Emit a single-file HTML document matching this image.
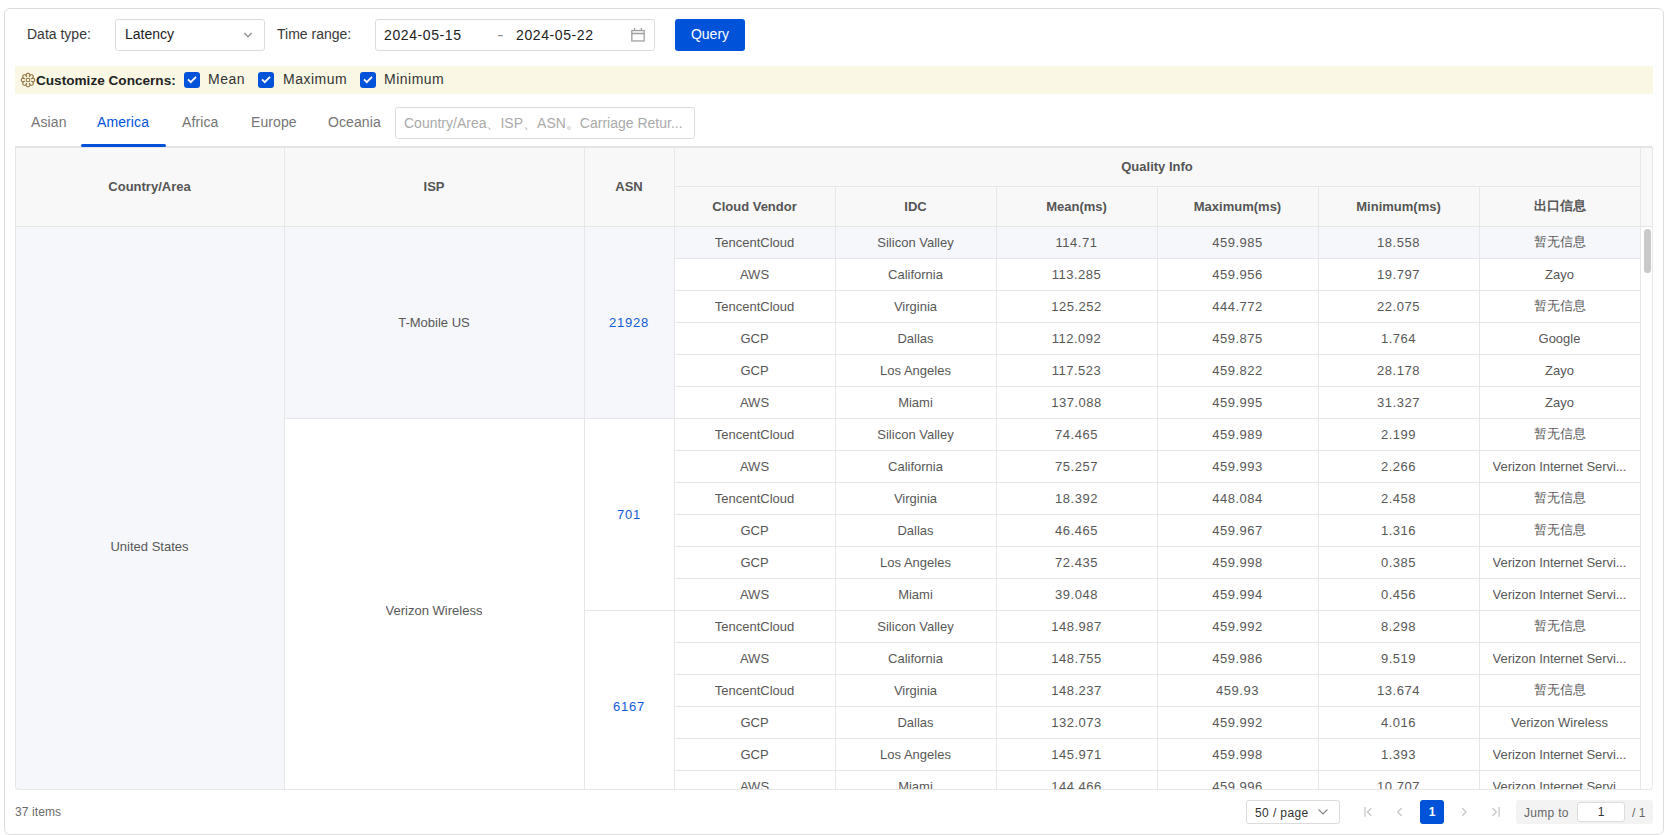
<!DOCTYPE html><html><head><meta charset="utf-8"><title>Quality</title><style>
*{box-sizing:border-box;margin:0;padding:0}
html,body{width:1670px;height:835px;overflow:hidden;background:#fff}
body{position:relative;font-family:"Liberation Sans",sans-serif;color:#333}
.a{position:absolute}
.t{position:absolute;white-space:nowrap}
.card{left:4px;top:8px;width:1660px;height:827px;border:1px solid #dcdcdc;border-radius:6px}
.lbl{font-size:14px;color:#383838;line-height:32px;top:18px}
.box{border:1px solid #dcdcdc;border-radius:3px;background:#fff}
.btn{left:675px;top:19px;width:70px;height:32px;background:#0052d9;border-radius:3px;color:#fff;font-size:14px;line-height:30px;text-align:center}
.bar{left:15px;top:66px;width:1638px;height:28px;background:#faf8e5}
.cb{width:16px;height:16px;background:#0052d9;border-radius:3px;top:72px}
.cbl{font-size:14px;color:#333;top:65px;line-height:28px;letter-spacing:.5px}
.tab{font-size:14px;color:#757575;top:107px;line-height:31px;letter-spacing:.1px}
.tab.on{color:#0052d9}
.hd{background:#f8f8f8}
.hc{position:absolute;display:flex;align-items:center;justify-content:center;font-weight:bold;font-size:13px;color:#555;white-space:nowrap}
.c{position:absolute;display:flex;align-items:center;justify-content:center;font-size:13px;color:#585858;white-space:nowrap;overflow:hidden}
.c span{display:block;overflow:hidden;text-overflow:ellipsis;max-width:100%}
.hl{position:absolute;height:1px;background:#e6e7ea}
.vl{position:absolute;width:1px;background:#e6e7ea}
.hov{background:#f5f7fa}
</style></head><body>
<div class="a card"></div>
<div class="t lbl" style="left:27px">Data type:</div>
<div class="a box" style="left:115px;top:19px;width:150px;height:32px"></div>
<div class="t lbl" style="left:125px;color:#222">Latency</div>
<svg class="a" style="left:241px;top:30px" width="14" height="10" viewBox="0 0 14 10"><path d="M3.3 3 L7 6.8 L10.7 3" fill="none" stroke="#8f8f8f" stroke-width="1.25"/></svg>
<div class="t lbl" style="left:277px">Time range:</div>
<div class="a box" style="left:375px;top:19px;width:280px;height:32px"></div>
<div class="t lbl" style="left:384px;top:19px;color:#222;letter-spacing:.6px">2024-05-15</div>
<div class="t lbl" style="left:498px;top:19px;color:#888;transform:scaleX(1.3)">-</div>
<div class="t lbl" style="left:516px;top:19px;color:#222;letter-spacing:.6px">2024-05-22</div>
<svg class="a" style="left:630px;top:27px" width="16" height="16" viewBox="0 0 16 16"><rect x="1.85" y="3.55" width="12.3" height="10.4" fill="none" stroke="#a0a0a0" stroke-width="1.3"/><path d="M1.5 6.5H14.5M4.5 0.9V3.5M11.4 0.9V3.5" stroke="#a0a0a0" stroke-width="1.3"/></svg>
<div class="a btn">Query</div>
<div class="a bar"></div>
<svg class="a" style="left:20px;top:72px" width="16" height="16" viewBox="0 0 16 16"><polygon points="14.70,8.00 14.68,8.26 14.63,8.52 14.53,8.77 14.40,9.01 14.22,9.24 14.01,9.44 13.74,9.62 13.42,9.76 13.00,9.84 11.33,9.38 12.84,10.23 13.08,10.59 13.21,10.92 13.27,11.23 13.28,11.53 13.24,11.81 13.16,12.07 13.05,12.32 12.91,12.54 12.74,12.74 12.54,12.91 12.32,13.05 12.07,13.16 11.81,13.24 11.53,13.28 11.23,13.27 10.92,13.21 10.59,13.08 10.23,12.84 9.38,11.33 9.84,13.00 9.76,13.42 9.62,13.74 9.44,14.01 9.24,14.22 9.01,14.40 8.77,14.53 8.52,14.63 8.26,14.68 8.00,14.70 7.74,14.68 7.48,14.63 7.23,14.53 6.99,14.40 6.76,14.22 6.56,14.01 6.38,13.74 6.24,13.42 6.16,13.00 6.62,11.33 5.77,12.84 5.41,13.08 5.08,13.21 4.77,13.27 4.47,13.28 4.19,13.24 3.93,13.16 3.68,13.05 3.46,12.91 3.26,12.74 3.09,12.54 2.95,12.32 2.84,12.07 2.76,11.81 2.72,11.53 2.73,11.23 2.79,10.92 2.92,10.59 3.16,10.23 4.67,9.38 3.00,9.84 2.58,9.76 2.26,9.62 1.99,9.44 1.78,9.24 1.60,9.01 1.47,8.77 1.37,8.52 1.32,8.26 1.30,8.00 1.32,7.74 1.37,7.48 1.47,7.23 1.60,6.99 1.78,6.76 1.99,6.56 2.26,6.38 2.58,6.24 3.00,6.16 4.67,6.62 3.16,5.77 2.92,5.41 2.79,5.08 2.73,4.77 2.72,4.47 2.76,4.19 2.84,3.93 2.95,3.68 3.09,3.46 3.26,3.26 3.46,3.09 3.68,2.95 3.93,2.84 4.19,2.76 4.47,2.72 4.77,2.73 5.08,2.79 5.41,2.92 5.77,3.16 6.62,4.67 6.16,3.00 6.24,2.58 6.38,2.26 6.56,1.99 6.76,1.78 6.99,1.60 7.23,1.47 7.48,1.37 7.74,1.32 8.00,1.30 8.26,1.32 8.52,1.37 8.77,1.47 9.01,1.60 9.24,1.78 9.44,1.99 9.62,2.26 9.76,2.58 9.84,3.00 9.38,4.67 10.23,3.16 10.59,2.92 10.92,2.79 11.23,2.73 11.53,2.72 11.81,2.76 12.07,2.84 12.32,2.95 12.54,3.09 12.74,3.26 12.91,3.46 13.05,3.68 13.16,3.93 13.24,4.19 13.28,4.47 13.27,4.77 13.21,5.08 13.08,5.41 12.84,5.77 11.33,6.62 13.00,6.16 13.42,6.24 13.74,6.38 14.01,6.56 14.22,6.76 14.40,6.99 14.53,7.23 14.63,7.48 14.68,7.74" fill="none" stroke="#93703f" stroke-width="1.1" stroke-linejoin="round"/><circle cx="8" cy="8" r="1.8" fill="none" stroke="#93703f" stroke-width="1.1"/></svg>
<div class="t cbl" style="left:36px;top:67px;font-weight:bold;color:#222;font-size:13.6px;letter-spacing:0">Customize Concerns:</div>
<div class="a cb" style="left:184px"><svg width="16" height="16" viewBox="0 0 16 16"><path d="M4 7.4 L6.8 10.2 L12 4.8" fill="none" stroke="#fff" stroke-width="1.8"/></svg></div>
<div class="t cbl" style="left:208px">Mean</div>
<div class="a cb" style="left:258px"><svg width="16" height="16" viewBox="0 0 16 16"><path d="M4 7.4 L6.8 10.2 L12 4.8" fill="none" stroke="#fff" stroke-width="1.8"/></svg></div>
<div class="t cbl" style="left:283px">Maximum</div>
<div class="a cb" style="left:360px"><svg width="16" height="16" viewBox="0 0 16 16"><path d="M4 7.4 L6.8 10.2 L12 4.8" fill="none" stroke="#fff" stroke-width="1.8"/></svg></div>
<div class="t cbl" style="left:384px">Minimum</div>
<div class="t tab" style="left:31px">Asian</div>
<div class="t tab on" style="left:97px">America</div>
<div class="t tab" style="left:182px">Africa</div>
<div class="t tab" style="left:251px">Europe</div>
<div class="t tab" style="left:328px">Oceania</div>
<div class="a box" style="left:395px;top:107px;width:300px;height:32px"></div>
<div class="a" style="left:81px;top:144px;width:85px;height:3px;border-radius:2px;background:#0052d9;z-index:5"></div>
<div class="t lbl" style="left:404px;top:107px;color:#aaa;width:280px;overflow:hidden;text-overflow:ellipsis">Country/Area、ISP、ASN。Carriage Retur...</div>
<div class="a hd" style="left:15px;top:147px;width:1637px;height:79px"></div>
<div class="a hov" style="left:15px;top:226px;width:269px;height:563px"></div>
<div class="a hov" style="left:284px;top:226px;width:390px;height:192px"></div>
<div class="a hov" style="left:674px;top:226px;width:966px;height:32px"></div>
<div class="hc" style="left:15px;top:147px;width:269px;height:79px">Country/Area</div>
<div class="hc" style="left:284px;top:147px;width:300px;height:79px">ISP</div>
<div class="hc" style="left:584px;top:147px;width:90px;height:79px">ASN</div>
<div class="hc" style="left:674px;top:147px;width:966px;height:39px">Quality Info</div>
<div class="hc" style="left:674px;top:186px;width:161px;height:40px">Cloud Vendor</div>
<div class="hc" style="left:835px;top:186px;width:161px;height:40px">IDC</div>
<div class="hc" style="left:996px;top:186px;width:161px;height:40px">Mean(ms)</div>
<div class="hc" style="left:1157px;top:186px;width:161px;height:40px">Maximum(ms)</div>
<div class="hc" style="left:1318px;top:186px;width:161px;height:40px">Minimum(ms)</div>
<div class="hc" style="left:1479px;top:186px;width:161px;height:40px">出口信息</div>
<div class="hl" style="left:15px;top:146px;width:1637px;background:#e3e3e3"></div>
<div class="hl" style="left:15px;top:147px;width:1638px"></div>
<div class="hl" style="left:674px;top:186px;width:966px"></div>
<div class="hl" style="left:15px;top:226px;width:1637px"></div>
<div class="vl" style="left:284px;top:147px;height:642px"></div>
<div class="vl" style="left:584px;top:147px;height:642px"></div>
<div class="vl" style="left:674px;top:147px;height:642px"></div>
<div class="vl" style="left:1640px;top:147px;height:642px"></div>
<div class="vl" style="left:835px;top:186px;height:603px"></div>
<div class="vl" style="left:996px;top:186px;height:603px"></div>
<div class="vl" style="left:1157px;top:186px;height:603px"></div>
<div class="vl" style="left:1318px;top:186px;height:603px"></div>
<div class="vl" style="left:1479px;top:186px;height:603px"></div>
<div class="hl" style="left:674px;top:258px;width:966px"></div>
<div class="hl" style="left:674px;top:290px;width:966px"></div>
<div class="hl" style="left:674px;top:322px;width:966px"></div>
<div class="hl" style="left:674px;top:354px;width:966px"></div>
<div class="hl" style="left:674px;top:386px;width:966px"></div>
<div class="hl" style="left:674px;top:418px;width:966px"></div>
<div class="hl" style="left:674px;top:450px;width:966px"></div>
<div class="hl" style="left:674px;top:482px;width:966px"></div>
<div class="hl" style="left:674px;top:514px;width:966px"></div>
<div class="hl" style="left:674px;top:546px;width:966px"></div>
<div class="hl" style="left:674px;top:578px;width:966px"></div>
<div class="hl" style="left:674px;top:610px;width:966px"></div>
<div class="hl" style="left:674px;top:642px;width:966px"></div>
<div class="hl" style="left:674px;top:674px;width:966px"></div>
<div class="hl" style="left:674px;top:706px;width:966px"></div>
<div class="hl" style="left:674px;top:738px;width:966px"></div>
<div class="hl" style="left:674px;top:770px;width:966px"></div>
<div class="hl" style="left:284px;top:418px;width:390px"></div>
<div class="hl" style="left:584px;top:610px;width:90px"></div>
<div class="c" style="left:15px;top:226px;width:269px;height:640px;"><span>United States</span></div>
<div class="c" style="left:284px;top:226px;width:300px;height:192px;"><span>T-Mobile US</span></div>
<div class="c" style="left:284px;top:418px;width:300px;height:384px;"><span>Verizon Wireless</span></div>
<div class="c" style="left:584px;top:226px;width:90px;height:192px;color:#1257d8;letter-spacing:.8px"><span>21928</span></div>
<div class="c" style="left:584px;top:418px;width:90px;height:192px;color:#1257d8;letter-spacing:.8px"><span>701</span></div>
<div class="c" style="left:584px;top:610px;width:90px;height:192px;color:#1257d8;letter-spacing:.8px"><span>6167</span></div>
<div class="c" style="left:674px;top:226px;width:161px;height:32px;"><span>TencentCloud</span></div>
<div class="c" style="left:835px;top:226px;width:161px;height:32px;"><span>Silicon Valley</span></div>
<div class="c" style="left:996px;top:226px;width:161px;height:32px;letter-spacing:.5px;"><span>114.71</span></div>
<div class="c" style="left:1157px;top:226px;width:161px;height:32px;letter-spacing:.5px;"><span>459.985</span></div>
<div class="c" style="left:1318px;top:226px;width:161px;height:32px;letter-spacing:.5px;"><span>18.558</span></div>
<div class="c" style="left:1479px;top:226px;width:161px;height:32px;padding:0 6px;"><span>暂无信息</span></div>
<div class="c" style="left:674px;top:258px;width:161px;height:32px;"><span>AWS</span></div>
<div class="c" style="left:835px;top:258px;width:161px;height:32px;"><span>California</span></div>
<div class="c" style="left:996px;top:258px;width:161px;height:32px;letter-spacing:.5px;"><span>113.285</span></div>
<div class="c" style="left:1157px;top:258px;width:161px;height:32px;letter-spacing:.5px;"><span>459.956</span></div>
<div class="c" style="left:1318px;top:258px;width:161px;height:32px;letter-spacing:.5px;"><span>19.797</span></div>
<div class="c" style="left:1479px;top:258px;width:161px;height:32px;padding:0 6px;"><span>Zayo</span></div>
<div class="c" style="left:674px;top:290px;width:161px;height:32px;"><span>TencentCloud</span></div>
<div class="c" style="left:835px;top:290px;width:161px;height:32px;"><span>Virginia</span></div>
<div class="c" style="left:996px;top:290px;width:161px;height:32px;letter-spacing:.5px;"><span>125.252</span></div>
<div class="c" style="left:1157px;top:290px;width:161px;height:32px;letter-spacing:.5px;"><span>444.772</span></div>
<div class="c" style="left:1318px;top:290px;width:161px;height:32px;letter-spacing:.5px;"><span>22.075</span></div>
<div class="c" style="left:1479px;top:290px;width:161px;height:32px;padding:0 6px;"><span>暂无信息</span></div>
<div class="c" style="left:674px;top:322px;width:161px;height:32px;"><span>GCP</span></div>
<div class="c" style="left:835px;top:322px;width:161px;height:32px;"><span>Dallas</span></div>
<div class="c" style="left:996px;top:322px;width:161px;height:32px;letter-spacing:.5px;"><span>112.092</span></div>
<div class="c" style="left:1157px;top:322px;width:161px;height:32px;letter-spacing:.5px;"><span>459.875</span></div>
<div class="c" style="left:1318px;top:322px;width:161px;height:32px;letter-spacing:.5px;"><span>1.764</span></div>
<div class="c" style="left:1479px;top:322px;width:161px;height:32px;padding:0 6px;"><span>Google</span></div>
<div class="c" style="left:674px;top:354px;width:161px;height:32px;"><span>GCP</span></div>
<div class="c" style="left:835px;top:354px;width:161px;height:32px;"><span>Los Angeles</span></div>
<div class="c" style="left:996px;top:354px;width:161px;height:32px;letter-spacing:.5px;"><span>117.523</span></div>
<div class="c" style="left:1157px;top:354px;width:161px;height:32px;letter-spacing:.5px;"><span>459.822</span></div>
<div class="c" style="left:1318px;top:354px;width:161px;height:32px;letter-spacing:.5px;"><span>28.178</span></div>
<div class="c" style="left:1479px;top:354px;width:161px;height:32px;padding:0 6px;"><span>Zayo</span></div>
<div class="c" style="left:674px;top:386px;width:161px;height:32px;"><span>AWS</span></div>
<div class="c" style="left:835px;top:386px;width:161px;height:32px;"><span>Miami</span></div>
<div class="c" style="left:996px;top:386px;width:161px;height:32px;letter-spacing:.5px;"><span>137.088</span></div>
<div class="c" style="left:1157px;top:386px;width:161px;height:32px;letter-spacing:.5px;"><span>459.995</span></div>
<div class="c" style="left:1318px;top:386px;width:161px;height:32px;letter-spacing:.5px;"><span>31.327</span></div>
<div class="c" style="left:1479px;top:386px;width:161px;height:32px;padding:0 6px;"><span>Zayo</span></div>
<div class="c" style="left:674px;top:418px;width:161px;height:32px;"><span>TencentCloud</span></div>
<div class="c" style="left:835px;top:418px;width:161px;height:32px;"><span>Silicon Valley</span></div>
<div class="c" style="left:996px;top:418px;width:161px;height:32px;letter-spacing:.5px;"><span>74.465</span></div>
<div class="c" style="left:1157px;top:418px;width:161px;height:32px;letter-spacing:.5px;"><span>459.989</span></div>
<div class="c" style="left:1318px;top:418px;width:161px;height:32px;letter-spacing:.5px;"><span>2.199</span></div>
<div class="c" style="left:1479px;top:418px;width:161px;height:32px;padding:0 6px;"><span>暂无信息</span></div>
<div class="c" style="left:674px;top:450px;width:161px;height:32px;"><span>AWS</span></div>
<div class="c" style="left:835px;top:450px;width:161px;height:32px;"><span>California</span></div>
<div class="c" style="left:996px;top:450px;width:161px;height:32px;letter-spacing:.5px;"><span>75.257</span></div>
<div class="c" style="left:1157px;top:450px;width:161px;height:32px;letter-spacing:.5px;"><span>459.993</span></div>
<div class="c" style="left:1318px;top:450px;width:161px;height:32px;letter-spacing:.5px;"><span>2.266</span></div>
<div class="c" style="left:1479px;top:450px;width:161px;height:32px;padding:0 6px;letter-spacing:-.05px;"><span>Verizon Internet Servi...</span></div>
<div class="c" style="left:674px;top:482px;width:161px;height:32px;"><span>TencentCloud</span></div>
<div class="c" style="left:835px;top:482px;width:161px;height:32px;"><span>Virginia</span></div>
<div class="c" style="left:996px;top:482px;width:161px;height:32px;letter-spacing:.5px;"><span>18.392</span></div>
<div class="c" style="left:1157px;top:482px;width:161px;height:32px;letter-spacing:.5px;"><span>448.084</span></div>
<div class="c" style="left:1318px;top:482px;width:161px;height:32px;letter-spacing:.5px;"><span>2.458</span></div>
<div class="c" style="left:1479px;top:482px;width:161px;height:32px;padding:0 6px;"><span>暂无信息</span></div>
<div class="c" style="left:674px;top:514px;width:161px;height:32px;"><span>GCP</span></div>
<div class="c" style="left:835px;top:514px;width:161px;height:32px;"><span>Dallas</span></div>
<div class="c" style="left:996px;top:514px;width:161px;height:32px;letter-spacing:.5px;"><span>46.465</span></div>
<div class="c" style="left:1157px;top:514px;width:161px;height:32px;letter-spacing:.5px;"><span>459.967</span></div>
<div class="c" style="left:1318px;top:514px;width:161px;height:32px;letter-spacing:.5px;"><span>1.316</span></div>
<div class="c" style="left:1479px;top:514px;width:161px;height:32px;padding:0 6px;"><span>暂无信息</span></div>
<div class="c" style="left:674px;top:546px;width:161px;height:32px;"><span>GCP</span></div>
<div class="c" style="left:835px;top:546px;width:161px;height:32px;"><span>Los Angeles</span></div>
<div class="c" style="left:996px;top:546px;width:161px;height:32px;letter-spacing:.5px;"><span>72.435</span></div>
<div class="c" style="left:1157px;top:546px;width:161px;height:32px;letter-spacing:.5px;"><span>459.998</span></div>
<div class="c" style="left:1318px;top:546px;width:161px;height:32px;letter-spacing:.5px;"><span>0.385</span></div>
<div class="c" style="left:1479px;top:546px;width:161px;height:32px;padding:0 6px;letter-spacing:-.05px;"><span>Verizon Internet Servi...</span></div>
<div class="c" style="left:674px;top:578px;width:161px;height:32px;"><span>AWS</span></div>
<div class="c" style="left:835px;top:578px;width:161px;height:32px;"><span>Miami</span></div>
<div class="c" style="left:996px;top:578px;width:161px;height:32px;letter-spacing:.5px;"><span>39.048</span></div>
<div class="c" style="left:1157px;top:578px;width:161px;height:32px;letter-spacing:.5px;"><span>459.994</span></div>
<div class="c" style="left:1318px;top:578px;width:161px;height:32px;letter-spacing:.5px;"><span>0.456</span></div>
<div class="c" style="left:1479px;top:578px;width:161px;height:32px;padding:0 6px;letter-spacing:-.05px;"><span>Verizon Internet Servi...</span></div>
<div class="c" style="left:674px;top:610px;width:161px;height:32px;"><span>TencentCloud</span></div>
<div class="c" style="left:835px;top:610px;width:161px;height:32px;"><span>Silicon Valley</span></div>
<div class="c" style="left:996px;top:610px;width:161px;height:32px;letter-spacing:.5px;"><span>148.987</span></div>
<div class="c" style="left:1157px;top:610px;width:161px;height:32px;letter-spacing:.5px;"><span>459.992</span></div>
<div class="c" style="left:1318px;top:610px;width:161px;height:32px;letter-spacing:.5px;"><span>8.298</span></div>
<div class="c" style="left:1479px;top:610px;width:161px;height:32px;padding:0 6px;"><span>暂无信息</span></div>
<div class="c" style="left:674px;top:642px;width:161px;height:32px;"><span>AWS</span></div>
<div class="c" style="left:835px;top:642px;width:161px;height:32px;"><span>California</span></div>
<div class="c" style="left:996px;top:642px;width:161px;height:32px;letter-spacing:.5px;"><span>148.755</span></div>
<div class="c" style="left:1157px;top:642px;width:161px;height:32px;letter-spacing:.5px;"><span>459.986</span></div>
<div class="c" style="left:1318px;top:642px;width:161px;height:32px;letter-spacing:.5px;"><span>9.519</span></div>
<div class="c" style="left:1479px;top:642px;width:161px;height:32px;padding:0 6px;letter-spacing:-.05px;"><span>Verizon Internet Servi...</span></div>
<div class="c" style="left:674px;top:674px;width:161px;height:32px;"><span>TencentCloud</span></div>
<div class="c" style="left:835px;top:674px;width:161px;height:32px;"><span>Virginia</span></div>
<div class="c" style="left:996px;top:674px;width:161px;height:32px;letter-spacing:.5px;"><span>148.237</span></div>
<div class="c" style="left:1157px;top:674px;width:161px;height:32px;letter-spacing:.5px;"><span>459.93</span></div>
<div class="c" style="left:1318px;top:674px;width:161px;height:32px;letter-spacing:.5px;"><span>13.674</span></div>
<div class="c" style="left:1479px;top:674px;width:161px;height:32px;padding:0 6px;"><span>暂无信息</span></div>
<div class="c" style="left:674px;top:706px;width:161px;height:32px;"><span>GCP</span></div>
<div class="c" style="left:835px;top:706px;width:161px;height:32px;"><span>Dallas</span></div>
<div class="c" style="left:996px;top:706px;width:161px;height:32px;letter-spacing:.5px;"><span>132.073</span></div>
<div class="c" style="left:1157px;top:706px;width:161px;height:32px;letter-spacing:.5px;"><span>459.992</span></div>
<div class="c" style="left:1318px;top:706px;width:161px;height:32px;letter-spacing:.5px;"><span>4.016</span></div>
<div class="c" style="left:1479px;top:706px;width:161px;height:32px;padding:0 6px;"><span>Verizon Wireless</span></div>
<div class="c" style="left:674px;top:738px;width:161px;height:32px;"><span>GCP</span></div>
<div class="c" style="left:835px;top:738px;width:161px;height:32px;"><span>Los Angeles</span></div>
<div class="c" style="left:996px;top:738px;width:161px;height:32px;letter-spacing:.5px;"><span>145.971</span></div>
<div class="c" style="left:1157px;top:738px;width:161px;height:32px;letter-spacing:.5px;"><span>459.998</span></div>
<div class="c" style="left:1318px;top:738px;width:161px;height:32px;letter-spacing:.5px;"><span>1.393</span></div>
<div class="c" style="left:1479px;top:738px;width:161px;height:32px;padding:0 6px;letter-spacing:-.05px;"><span>Verizon Internet Servi...</span></div>
<div class="c" style="left:674px;top:770px;width:161px;height:32px;"><span>AWS</span></div>
<div class="c" style="left:835px;top:770px;width:161px;height:32px;"><span>Miami</span></div>
<div class="c" style="left:996px;top:770px;width:161px;height:32px;letter-spacing:.5px;"><span>144.466</span></div>
<div class="c" style="left:1157px;top:770px;width:161px;height:32px;letter-spacing:.5px;"><span>459.996</span></div>
<div class="c" style="left:1318px;top:770px;width:161px;height:32px;letter-spacing:.5px;"><span>10.707</span></div>
<div class="c" style="left:1479px;top:770px;width:161px;height:32px;padding:0 6px;letter-spacing:-.05px;"><span>Verizon Internet Servi...</span></div>
<div class="a" style="left:14px;top:789px;width:1639px;height:40px;background:#fff"></div>
<div class="a" style="left:15px;top:147px;width:1638px;height:643px;border:1px solid #e7e7e7;border-top:none;border-radius:0 0 4px 4px"></div>
<div class="a" style="left:1644px;top:229px;width:7px;height:44px;border-radius:4px;background:#c9c9c9"></div>
<div class="t" style="left:15px;top:804px;font-size:12px;line-height:16px;color:#6b6b6b;letter-spacing:.1px">37 items</div>
<div class="a box" style="left:1246px;top:800px;width:94px;height:24px"></div>
<div class="t" style="left:1255px;top:801px;font-size:12px;line-height:24px;color:#333;letter-spacing:.4px">50 / page</div>
<svg class="a" style="left:1317px;top:807px" width="12" height="10" viewBox="0 0 12 10"><path d="M1.5 2.5 L6 7 L10.5 2.5" fill="none" stroke="#888" stroke-width="1.2"/></svg>
<svg class="a" style="left:1362px;top:806px" width="12" height="12" viewBox="0 0 12 12"><path d="M3 1V10.8" fill="none" stroke="#cfcfcf" stroke-width="1.5"/><path d="M9.2 2L5.4 6L9.2 9.7" fill="none" stroke="#c4c4c4" stroke-width="1.2"/></svg>
<svg class="a" style="left:1395px;top:806px" width="12" height="12" viewBox="0 0 12 12"><path d="M6.6 2L2.7 6L6.6 9.7" fill="none" stroke="#c4c4c4" stroke-width="1.2"/></svg>
<div class="a" style="left:1420px;top:800px;width:24px;height:24px;border-radius:3px;background:#0052d9;color:#fff;font-size:12px;line-height:24px;text-align:center;font-weight:bold">1</div>
<svg class="a" style="left:1458px;top:806px" width="12" height="12" viewBox="0 0 12 12"><path d="M4.2 2L8.1 6L4.2 9.7" fill="none" stroke="#c4c4c4" stroke-width="1.2"/></svg>
<svg class="a" style="left:1489px;top:806px" width="12" height="12" viewBox="0 0 12 12"><path d="M10.1 1V10.8" fill="none" stroke="#cfcfcf" stroke-width="1.5"/><path d="M3.5 2L7.4 6L3.5 9.7" fill="none" stroke="#c4c4c4" stroke-width="1.2"/></svg>
<div class="a" style="left:1516px;top:800px;width:137px;height:24px;border-radius:3px;background:#f3f3f3"></div>
<div class="t" style="left:1524px;top:801px;font-size:12px;line-height:24px;color:#666;letter-spacing:.3px">Jump to</div>
<div class="a box" style="left:1577px;top:802px;width:48px;height:20px;text-align:center;font-size:12px;line-height:18px;color:#333">1</div>
<div class="t" style="left:1632px;top:801px;font-size:12px;line-height:24px;color:#666">/ 1</div>
</body></html>
